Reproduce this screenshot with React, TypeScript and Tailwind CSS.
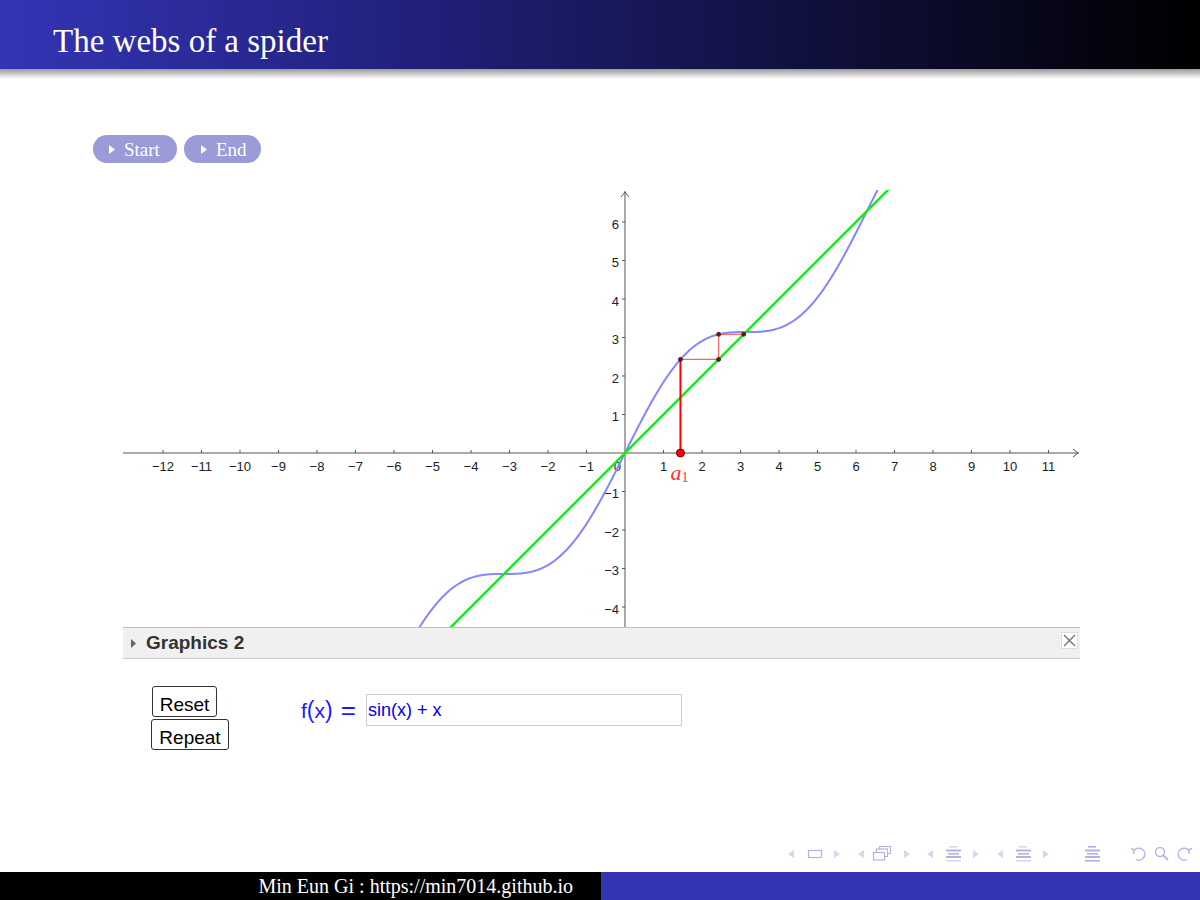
import React from "react";

const S = 38.5;
const OX = 502;
const OY = 263;
const GW = 957;
const GH = 437;
const px = (x: number) => OX + x * S;
const py = (y: number) => OY - y * S;
const f = (x: number) => Math.sin(x) + x;

function curvePath() {
  let d = "";
  const n = 700;
  for (let i = 0; i <= n; i++) {
    const x = -6.5 + (i * 14) / n;
    d += (i ? "L" : "M") + px(x).toFixed(2) + "," + py(f(x)).toFixed(2);
  }
  return d;
}

function Graph() {
  const xs: number[] = [];
  for (let i = -12; i <= 11; i++) if (i !== 0) xs.push(i);
  const ys: number[] = [];
  for (let j = -4; j <= 6; j++) if (j !== 0) ys.push(j);
  const a = 1.44;
  const b = f(a);
  const c = f(b);
  const d = f(c);
  const lab = (n: number) => (n < 0 ? "\u2212" + Math.abs(n) : String(n));
  return (
    <svg width={GW} height={GH} className="block overflow-hidden font-['Liberation_Sans',Arial,sans-serif]">
      <line x1={0} y1={OY} x2={GW - 1} y2={OY} stroke="#555" strokeWidth={1} />
      <polyline points={`${GW - 7},${OY - 4} ${GW - 2},${OY} ${GW - 7},${OY + 4}`} fill="none" stroke="#555" strokeWidth={1} />
      <line x1={OX} y1={1} x2={OX} y2={GH} stroke="#555" strokeWidth={1} />
      <polyline points={`${OX - 4},${7} ${OX},${2} ${OX + 4},${7}`} fill="none" stroke="#555" strokeWidth={1} />
      {xs.map((i) => (
        <g key={"x" + i}>
          <line x1={px(i)} y1={OY - 3} x2={px(i)} y2={OY} stroke="#555" strokeWidth={1} />
          <text x={px(i)} y={OY + 18} fontSize={13} fill="#222" textAnchor="middle">
            {lab(i)}
          </text>
        </g>
      ))}
      {ys.map((j) => (
        <g key={"y" + j}>
          <line x1={OX - 3} y1={py(j)} x2={OX} y2={py(j)} stroke="#555" strokeWidth={1} />
          <text x={OX - 6} y={py(j) + 6.5} fontSize={13} fill="#222" textAnchor="end">
            {lab(j)}
          </text>
        </g>
      ))}
      <text x={OX - 4} y={OY + 18} fontSize={13} fill="#222" textAnchor="end">
        0
      </text>
      <path d={curvePath()} fill="none" stroke="#8585ff" strokeWidth={2} />
      <line x1={px(-6.5)} y1={py(-6.5)} x2={px(8)} y2={py(8)} stroke="#1ee61e" strokeWidth={2.5} />
      <line x1={px(a)} y1={py(b)} x2={px(b)} y2={py(b)} stroke="#ff6060" strokeWidth={1.3} />
      <line x1={px(b)} y1={py(b)} x2={px(b)} y2={py(c)} stroke="#ff7070" strokeWidth={1.3} />
      <line x1={px(b)} y1={py(c)} x2={px(c)} y2={py(c)} stroke="#ff6060" strokeWidth={1.3} />
      <line x1={px(c)} y1={py(c)} x2={px(c)} y2={py(d)} stroke="#ff6060" strokeWidth={1.3} />
      <line x1={px(a)} y1={py(0)} x2={px(a)} y2={py(b)} stroke="#ff0000" strokeWidth={2} />
      {[
        [a, b],
        [b, b],
        [b, c],
        [c, c],
      ].map(([x, y], k) => (
        <circle key={k} cx={px(x)} cy={py(y)} r={2} fill="#7a1020" stroke="#222" strokeWidth={0.8} />
      ))}
      <circle cx={px(a)} cy={py(0)} r={4} fill="#ff0000" stroke="#700" strokeWidth={1} />
      <text x={px(a) - 10} y={OY + 27} fontSize={22} fill="#ff3030" fontStyle="italic" fontFamily="'Liberation Serif', serif">
        a
      </text>
      <text x={px(a) + 1} y={OY + 29} fontSize={14} fill="#ff3030" fontFamily="'Liberation Serif', serif">
        1
      </text>
    </svg>
  );
}

function Tri({ right }: { right?: boolean }) {
  return (
    <svg width={6} height={9} className="block">
      {right ? <polygon points="0,0 6,4.5 0,9" fill="#fff" /> : <polygon points="6,0 0,4.5 6,9" fill="#fff" />}
    </svg>
  );
}

function NavIcons() {
  const L = "#d6d6f1";
  const D = "#b3b3e3";
  const tl = (x: number) => <polygon key={"l" + x} points={`${x + 6},7 ${x},11 ${x + 6},15`} fill={L} />;
  const tr = (x: number) => <polygon key={"r" + x} points={`${x},7 ${x + 6},11 ${x},15`} fill={L} />;
  const list = (x: number, dark: boolean) => (
    <g key={"list" + x}>
      <rect x={x + 3} y={3} width={8} height={1.6} fill={dark ? D : L} />
      <rect x={x} y={6.5} width={15} height={2} fill={D} />
      <rect x={x + 2} y={10} width={11} height={1.6} fill={D} />
      <rect x={x} y={13} width={15} height={2} fill={D} />
      <rect x={x} y={17} width={15} height={1.6} fill={dark ? D : L} />
    </g>
  );
  return (
    <svg width={420} height={20} className="block">
      {tl(8)}
      <rect x={28.5} y={7.5} width={13} height={7} fill="none" stroke={D} strokeWidth={1.2} />
      {tr(54)}
      {tl(78)}
      <rect x={99.5} y={3.5} width={11} height={7} fill="#fff" stroke={D} strokeWidth={1.2} />
      <rect x={96.5} y={6} width={11} height={7.5} fill="#fff" stroke={D} strokeWidth={1.2} />
      <rect x={93.5} y={9.5} width={11} height={7.5} fill="#fff" stroke={D} strokeWidth={1.2} />
      {tr(124)}
      {tl(147)}
      {list(166, false)}
      {tr(193)}
      {tl(217)}
      {list(236, false)}
      {tr(263)}
      {list(305, true)}
      <path d="M354.5 7 A6 6 0 1 1 356 16.5" fill="none" stroke={D} strokeWidth={1.4} />
      <polyline points="351,5.5 354.5,7 353.5,11" fill="none" stroke={D} strokeWidth={1.4} />
      <circle cx={380} cy={9} r={4.5} fill="none" stroke={D} strokeWidth={1.4} />
      <line x1={383.3} y1={12.3} x2={388} y2={17} stroke={D} strokeWidth={1.8} />
      <path d="M408.5 7 A6 6 0 1 0 407 16.5" fill="none" stroke={D} strokeWidth={1.4} />
      <polyline points="412,5.5 408.5,7 409.5,11" fill="none" stroke={D} strokeWidth={1.4} />
    </svg>
  );
}

export default function App() {
  return (
    <div className="w-[1200px] h-[900px] flex flex-col bg-white overflow-hidden">
      <div className="h-[69px] bg-[linear-gradient(to_right,#3434b6,#20207a_35%,#000000)] pl-[53px] pt-[25px]">
        <div className="text-white text-[33px] leading-[33px] font-['Liberation_Serif',serif]">The webs of a spider</div>
      </div>
      <div className="h-[10px] bg-[linear-gradient(to_bottom,#9a9a9a,#ffffff)]" />

      <div className="mt-[56px] ml-[93px] flex gap-[7px]">
        <div className="h-[28px] w-[84px] rounded-full bg-[#9b9bd7] flex items-center pl-[16px] gap-[9px]">
          <Tri right />
          <span className="text-white text-[19px] leading-none font-['Liberation_Serif',serif]">Start</span>
        </div>
        <div className="h-[28px] w-[77px] rounded-full bg-[#9b9bd7] flex items-center pl-[17px] gap-[9px]">
          <Tri right />
          <span className="text-white text-[19px] leading-none font-['Liberation_Serif',serif]">End</span>
        </div>
      </div>

      <div className="mt-[27px] ml-[123px] w-[957px]">
        <Graph />
        <div className="h-[32px] bg-[#f0f0f0] border-t border-b border-t-[#c0c0c0] border-b-[#cccccc] flex items-center pl-[8px] relative">
          <svg width={5} height={9} className="block">
            <polygon points="0,0 5,4.5 0,9" fill="#666" />
          </svg>
          <span className="ml-[10px] text-[19px] font-bold text-[#333] font-['Liberation_Sans',Arial,sans-serif]">Graphics 2</span>
          <div className="absolute right-[2px] top-[4px] w-[17px] h-[17px] bg-white border border-[#dddddd] flex items-center justify-center">
            <svg width={13} height={13} className="block">
              <line x1={1} y1={1} x2={12} y2={12} stroke="#777" strokeWidth={1.4} />
              <line x1={12} y1={1} x2={1} y2={12} stroke="#777" strokeWidth={1.4} />
            </svg>
          </div>
        </div>
      </div>

      <div className="mt-[27px] ml-[151px] flex items-start">
        <div className="flex flex-col gap-[2px]">
          <div className="ml-[1px] w-[65px] h-[31px] pt-[7px] border border-[#333] rounded-[3px] flex items-center justify-center text-[19px] text-black font-['Liberation_Sans',Arial,sans-serif]">
            Reset
          </div>
          <div className="w-[78px] h-[31px] pt-[7px] border border-[#333] rounded-[3px] flex items-center justify-center text-[19px] text-black font-['Liberation_Sans',Arial,sans-serif]">
            Repeat
          </div>
        </div>
        <div className="ml-[72px] mt-[8px] h-[32px] flex items-center">
          <div className="w-[65px] flex items-center gap-[8px] text-[#1a1aff] font-['Liberation_Sans',Arial,sans-serif]">
            <span className="text-[21px] leading-none">
              f<span className="text-[23px]">(</span>x<span className="text-[23px]">)</span>
            </span>
            <span className="text-[26px] leading-none">=</span>
          </div>
          <div className="w-[316px] h-[32px] border border-[#cccccc] flex items-center pl-[1px] text-[18px] text-[#0000ee] font-['Liberation_Sans',Arial,sans-serif]">
            sin(x) + x
          </div>
        </div>
      </div>

      <div className="flex-1" />

      <div className="h-[20px] mb-[9px] flex justify-end">
        <NavIcons />
      </div>

      <div className="h-[28px] flex">
        <div className="w-[601px] bg-black flex items-center justify-end pr-[28px]">
          <span className="text-white text-[20px] leading-none font-['Liberation_Serif',serif]">Min Eun Gi : https://min7014.github.io</span>
        </div>
        <div className="flex-1 bg-[#3333b3]" />
      </div>
    </div>
  );
}
